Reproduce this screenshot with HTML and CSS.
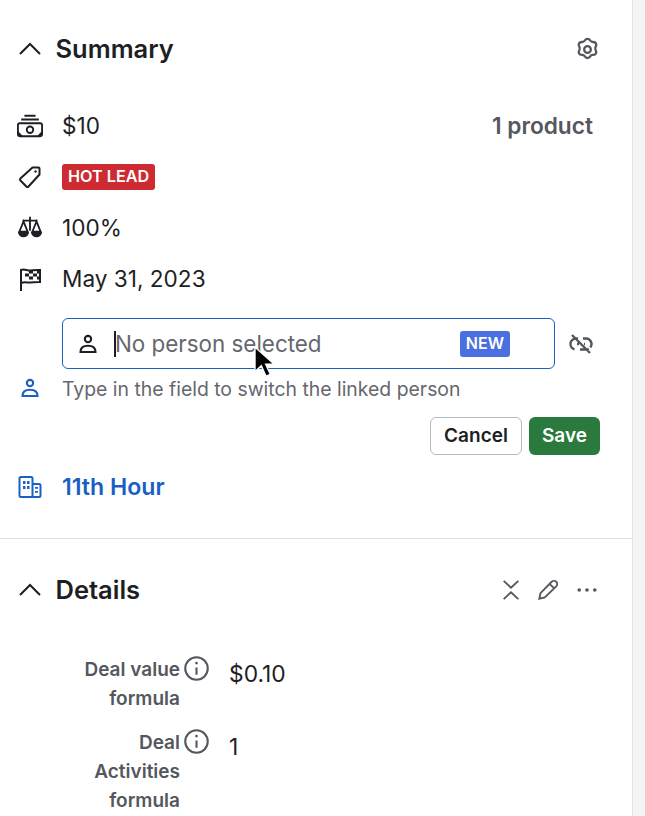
FILE: index.html
```html
<!DOCTYPE html>
<html lang="en">
<head>
<meta charset="utf-8">
<title>Deal sidebar</title>
<link rel="stylesheet" href="styles.css">
</head>
<body>
<div class="panel">
  <section class="section summary">
    <header class="sec-head">
      <svg class="chev" viewBox="0 0 24 24"><path d="M2 17 12 7l10 10"/></svg>
      <h2>Summary</h2>
      <div class="tools">
        <svg class="ico gray gear" viewBox="0 0 24 24"><path d="M12 1.800c1.300 0 2.200.8 2.800 1.800.5.800 1.300 1.200 2.300 1.200 1.200-.1 2.400.2 3 1.300.6 1.100.3 2.300-.3 3.300-.5.800-.5 2.300 0 3.200.6 1 .9 2.200.3 3.300-.6 1.100-1.800 1.400-3 1.300-1-.1-1.800.4-2.300 1.200-.6 1-1.500 1.800-2.800 1.800s-2.200-.8-2.800-1.800c-.5-.8-1.300-1.300-2.300-1.200-1.200.1-2.400-.2-3-1.300-.6-1.100-.3-2.300.3-3.300.5-.9.500-2.400 0-3.200-.6-1-.9-2.200-.3-3.300.6-1.100 1.800-1.400 3-1.300 1 0 1.800-.4 2.300-1.200.6-1 1.500-1.800 2.800-1.800Z"/><circle cx="12" cy="12" r="3.200"/></svg>
      </div>
    </header>
    <div class="row r-first">
      <svg class="ico lead" viewBox="0 0 28 24"><path d="M8 1h12M4.500 5h19"/><rect x="1" y="9" width="26" height="14" rx="2"/><circle cx="14" cy="16" r="3.500"/><path class="fill" d="M1 17.500 6.500 23H1ZM27 17.500 21.500 23H27Z"/></svg>
      <span class="val">$10</span>
      <span class="prod">1 product</span>
    </div>
    <div class="row">
      <svg class="ico lead" viewBox="0 0 24 24"><path d="M14.500 2.500h6a1 1 0 0 1 1 1v6L10.500 21.500a1.500 1.500 0 0 1-2.100 0l-6-6a1.500 1.500 0 0 1 0-2.100Z"/><circle class="dot" cx="17.500" cy="6.500" r="1.200"/></svg>
      <span class="tag">HOT LEAD</span>
    </div>
    <div class="row">
      <svg class="ico lead" viewBox="0 0 28 24"><path d="M14 0v4M6 4h16M14 4v11"/><path d="M7 5 2.500 16h9ZM21 5l-4.500 11h9Z"/><path class="fill" d="M1 16h12a6 6 0 0 1-12 0ZM15 16h12a6 6 0 0 1-12 0Z"/></svg>
      <span class="val">100%</span>
    </div>
    <div class="row">
      <svg class="ico lead" viewBox="0 0 24 24"><path d="M3 24V2M3 3c4-1.500 6 1 10 .5 3-.3 6-.8 9-.5v12c-3 0-6 .3-9 .5-4 .3-6-1-10 .5"/><path class="fill" d="M11 3.500h4v3h-4zM19 3.500h3v3h-3zM15 6.500h4v3h-4zM11 9.500h4v3h-4zM19 9.500h3v3h-3zM7 6.500h4v3H7z"/></svg>
      <span class="val">May 31, 2023</span>
    </div>
    <div class="person">
      <svg class="ico blue person-ico" viewBox="0 0 24 24"><circle cx="12" cy="6" r="3.800"/><path d="M3 21.500c0-5 3.500-7.500 9-7.500s9 2.500 9 7.500Z"/></svg>
      <div class="person-main">
        <div class="field-line">
          <div class="field">
            <svg class="ico f-ico" viewBox="0 0 24 24"><circle cx="12" cy="6" r="3.800"/><path d="M3 21.500c0-5 3.500-7.500 9-7.500s9 2.500 9 7.500Z"/></svg>
            <span class="caret"></span>
            <span class="ph">No person selected</span>
            <span class="new">NEW</span>
          </div>
          <svg class="ico unlink" viewBox="0 0 24 24"><path d="M9 6.500H7a5.500 5.500 0 0 0-1.500 10.800M11 17.500h6c1 0 2-.3 2.800-.8M14 6.500h3a5.500 5.500 0 0 1 4.300 8.900M8 12h2M15 12h1M3 3l18 18"/></svg>
        </div>
        <p class="hint">Type in the field to switch the linked person</p>
        <div class="actions">
          <button class="btn cancel">Cancel</button>
          <button class="btn save">Save</button>
        </div>
      </div>
    </div>
    <div class="row org">
      <svg class="ico lead blue" viewBox="0 0 24 24"><rect x="1.500" y="2" width="13" height="20" rx="1.500"/><path d="M14.500 9h6.500a1.500 1.500 0 0 1 1.500 1.500V20.500a1.500 1.500 0 0 1-1.500 1.500h-6.500"/><path class="bluefill" d="M5 6h2.500v3H5zM9 6h2.500v3H9zM5 11h2.500v3H5zM9 11h2.500v3H9zM17 12h3v1.800h-3zM17 16h3v1.800h-3z"/></svg>
      <a class="org-name">11th Hour</a>
    </div>
  </section>
  <section class="section details">
    <header class="sec-head">
      <svg class="chev" viewBox="0 0 24 24"><path d="M2 17 12 7l10 10"/></svg>
      <h2>Details</h2>
      <div class="tools tools-3">
        <svg class="ico gray collapse" viewBox="0 0 24 24"><path d="M4 2l8 7.500L20 2M4 22l8-7.500 8 7.500"/></svg>
        <svg class="ico gray" viewBox="0 0 24 24"><path d="M2.500 21.500l1.300-6L16 3a2.800 2.800 0 0 1 5 5L8.500 20.200Z"/><path d="M14 5.500l4.500 4.500"/></svg>
        <svg class="ico gray" viewBox="0 0 24 24"><circle class="graydot" cx="3.500" cy="12" r="2"/><circle class="graydot" cx="12" cy="12" r="2"/><circle class="graydot" cx="20.500" cy="12" r="2"/></svg>
      </div>
    </header>
    <dl class="fields">
      <div class="f-row">
        <dt>Deal value formula</dt>
        <svg class="info" viewBox="0 0 24 24"><circle cx="12" cy="12" r="10.800"/><path d="M12 11v7"/><circle class="dot" cx="12" cy="6.800" r="1.300"/></svg>
        <dd>$0.10</dd>
      </div>
      <div class="f-row">
        <dt>Deal Activities formula</dt>
        <svg class="info" viewBox="0 0 24 24"><circle cx="12" cy="12" r="10.800"/><path d="M12 11v7"/><circle class="dot" cx="12" cy="6.800" r="1.300"/></svg>
        <dd>1</dd>
      </div>
    </dl>
  </section>
  <svg class="cursor" viewBox="0 0 20 30"><path d="M1 1v23l6-5.500 4.500 10 4-1.800L11 17h8Z"/></svg>
</div>
</body>
</html>
```
FILE: styles.css
```css
* { box-sizing: border-box; }
html, body { margin: 0; height: 816px; overflow: hidden; }
body { background: #f4f4f5; font-family: Inter, "Liberation Sans", sans-serif; color: #1d1f24; }
.panel { position: relative; width: 633px; height: 816px; background: #fff; border-right: 1px solid #e3e3e5; overflow: hidden; }
.section { padding: 0 32px 0 18px; }
.summary { height: 539px; border-bottom: 1px solid #dfdfe1; padding-top: 32px; }
.sec-head { display: flex; align-items: center; height: 34px; }
h2 { margin: 0 0 0 13.500px; font-size: 25.500px; line-height: 34px; font-weight: 600; }
.chev { width: 24px; height: 24px; fill: none; stroke: #1d1f24; stroke-width: 2; }
.tools { margin-left: auto; margin-right: 2px; display: flex; align-items: center; gap: 17px; }
.ico { width: 22px; height: 22px; fill: none; stroke: #1d1f24; stroke-width: 2; flex: none; }
.gray { stroke: #55575e; }
.gear { width: 25px; height: 25px; margin: 0 -1.500px; stroke-width: 2.200; }
.collapse { margin-right: -2px; }
.blue { stroke: #1a5fc4; }
.fill { fill: #1d1f24; stroke: none; }
.bluefill { fill: #1a5fc4; stroke: none; }
.graydot { fill: #55575e; stroke: none; }
.dot { fill: #1d1f24; stroke: none; }
.row { display: flex; align-items: center; height: 51px; }
.r-first { margin-top: 34px; }
.lead { width: 26px; height: 24px; margin-left: -1px; }
.val { margin-left: 19px; font-size: 22.600px; line-height: 30px; }
.prod { margin-left: auto; margin-right: 7px; font-size: 22.700px; font-weight: 600; color: #55575e; }
.tag { margin-left: 19px; height: 26px; padding: 0 6px; background: #cd2b31; color: #fff; border-radius: 3px; font-size: 16.200px; line-height: 25px; font-weight: 600; }
.person { display: flex; align-items: flex-start; height: 154px; margin-top: 14px; }
.person-ico { margin: 60px 0 0 2px; width: 20px; height: 20px; stroke-width: 2.500; }
.person-main { margin-left: 22px; width: 538px; }
.field-line { display: flex; align-items: center; height: 51px; }
.field { display: flex; align-items: center; width: 493px; height: 51px; border: 1px solid #1a5fc4; border-radius: 6px; padding-left: 15px; }
.f-ico { width: 20px; height: 20px; stroke-width: 2.500; }
.caret { width: 2px; height: 26px; margin-left: 16px; background: #1d1f24; }
.ph { margin-left: -1px; font-size: 22.400px; color: #65676e; }
.new { margin-left: auto; margin-right: 44px; height: 26px; padding: 0 6px; background: #4a6fe0; color: #fff; border-radius: 3px; font-size: 16px; line-height: 24px; font-weight: 600; }
.unlink { margin-left: 14px; width: 24px; height: 24px; stroke: #55575e; stroke-width: 2.400; }
.hint { margin: 6px 0 0; font-size: 19.400px; line-height: 28px; color: #65676e; }
.actions { display: flex; justify-content: flex-end; gap: 7px; margin-top: 14px; }
.btn { height: 38px; padding: 0 0 2px; border-radius: 6px; font: 600 19px Inter, sans-serif; }
.cancel { width: 92px; background: #fff; border: 1px solid #b9babd; color: #1d1f24; }
.save { width: 71px; background: #2a7a3d; border: 0; color: #fff; }
.org { height: 30px; }
.org-name { margin-left: 19px; font-size: 23.100px; font-weight: 600; color: #1a5fc4; }
.details { padding-top: 34px; }
.fields { margin: 48px 0 0; }
.f-row { display: flex; align-items: flex-start; }
.f-row + .f-row { margin-top: 15px; }
dt { width: 162px; padding-left: 50px; text-align: right; font-size: 19px; line-height: 29px; font-weight: 600; color: #55575e; }
.info { width: 25px; height: 25px; margin: 1px 0 0 4px; fill: none; stroke: #55575e; stroke-width: 2; flex: none; }
.info .dot { fill: #55575e; }
dd { margin: 4px 0 0 20px; font-size: 22.800px; line-height: 30px; }
.cursor { position: absolute; left: 254px; top: 346px; width: 21px; height: 32px; fill: #000; stroke: #fff; stroke-width: 1.200; }
```
